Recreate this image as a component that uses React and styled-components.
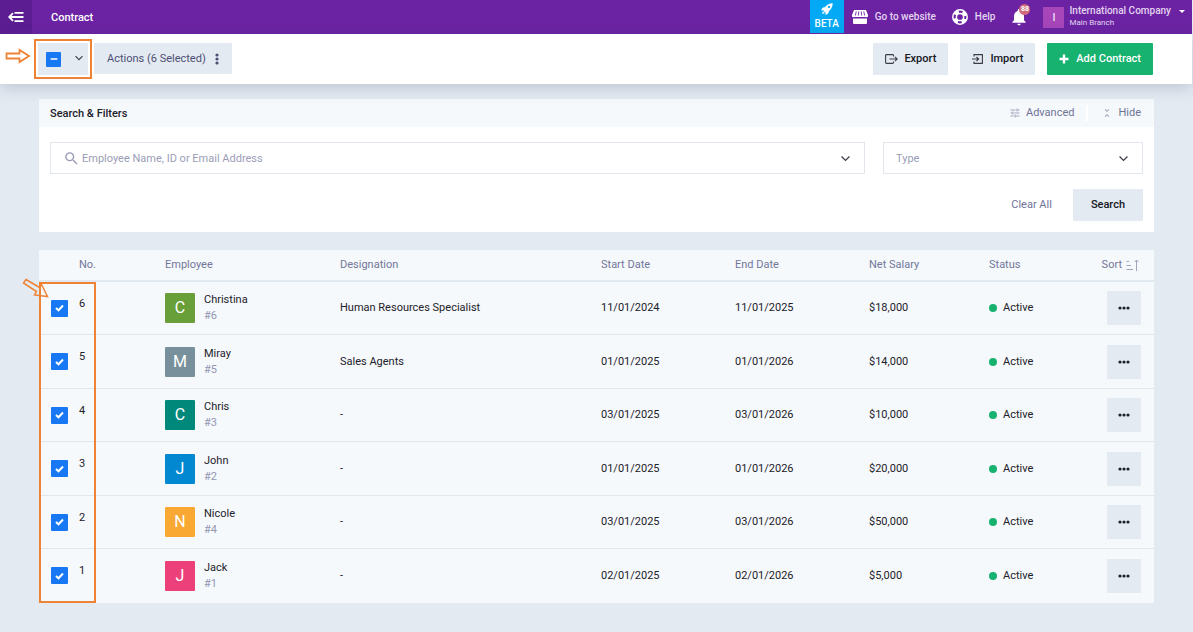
import React, { useEffect, useRef } from "react";
import styled, { createGlobalStyle } from "styled-components";
import { MdSearch, MdTune, MdUnfoldLess, MdNotifications } from "react-icons/md";
import { FaMinus } from "react-icons/fa";
import { IoIosRocket } from "react-icons/io";

const GlobalStyle = createGlobalStyle`
  * {
    box-sizing: border-box;
  }

  body {
    margin: 0;
    background-color: #e4eaf2;
    font-family: Roboto, "Liberation Sans", sans-serif;
    font-size: 11px;
    line-height: 16px;
    color: #1d2129;
  }

  button,
  input,
  select {
    font: inherit;
    color: inherit;
    margin: 0;
  }

  button {
    border: none;
    padding: 0;
    background: none;
    cursor: pointer;
  }
`;

const Page = styled.div`
  min-height: 100vh;
  padding-right: 1px;
`;

const TopBar = styled.header`
  display: flex;
  align-items: center;
  height: 34px;
  background-color: #6b23a3;
  color: #fff;
`;

const MenuButton = styled.button`
  display: flex;
  align-items: center;
  justify-content: center;
  width: 32px;
  height: 34px;
  background-color: #5c1d93;
`;

const PageTitle = styled.h1`
  flex: 1;
  margin: 0 0 0 19px;
  padding-top: 1px;
  font-size: 11px;
  font-weight: 500;
`;

const Beta = styled.a`
  display: flex;
  flex-direction: column;
  align-items: center;
  width: 34px;
  height: 33px;
  padding-top: 2px;
  align-self: flex-start;
  background-color: #03a9f4;
  color: #fff;
  font-size: 10px;
  font-weight: 500;
  text-decoration: none;
`;

const TopLink = styled.a`
  display: flex;
  align-items: center;
  gap: 7px;
  margin-left: ${(props) => props.$space}px;
  color: #e3d3f0;
  font-size: 10px;
  font-weight: 500;
  text-decoration: none;

  svg {
    color: #fff;
  }
`;

const BellButton = styled.button`
  position: relative;
  width: 20px;
  height: 20px;
  margin-left: 14px;
  color: #fff;
`;

const Badge = styled.span`
  position: absolute;
  top: -3px;
  right: -1px;
  width: 11px;
  height: 11px;
  border-radius: 50%;
  background-color: #d06a7c;
  font-size: 7px;
  font-weight: 700;
  line-height: 11px;
  text-align: center;
`;

const Account = styled.button`
  display: flex;
  align-items: center;
  margin: 0 7px 0 14px;
  text-align: left;
  color: #e3d3f0;
`;

const AccountInitial = styled.span`
  width: 21px;
  height: 21px;
  margin-right: 5px;
  background-color: #a646b9;
  color: #fff;
  line-height: 21px;
  text-align: center;
`;

const AccountText = styled.span`
  display: flex;
  flex-direction: column;
  margin-right: 8px;
  font-size: 10px;
  font-weight: 500;
  line-height: 12px;

  small {
    font-size: 8px;
    font-weight: 400;
  }
`;

const Caret = styled.span`
  align-self: flex-start;
  margin-top: 5px;
  border: 3px solid transparent;
  border-top-color: #fff;
  border-bottom: none;
`;

const Toolbar = styled.div`
  position: relative;
  display: flex;
  align-items: flex-start;
  height: 50px;
  padding: 9px 39px 0 38px;
  background-color: #fff;
  box-shadow: 0 4px 14px rgba(60, 75, 105, 0.22);
`;

const SelectAll = styled.div`
  display: flex;
  align-items: center;
  justify-content: space-between;
  width: 50px;
  height: 32px;
  padding: 0 5px 0 8px;
  background-color: #e4eaf2;
`;

const CheckWrap = styled.span`
  display: grid;
  place-items: center;
  width: ${(props) => props.$size}px;
  height: ${(props) => props.$size}px;

  input,
  svg {
    grid-area: 1 / 1;
  }

  input {
    appearance: none;
    width: 100%;
    height: 100%;
    border-radius: 1px;
    background-color: #1877f2;
  }

  svg {
    z-index: 1;
    color: #fff;
    pointer-events: none;
  }
`;

const ToolButton = styled.button`
  display: flex;
  align-items: center;
  justify-content: center;
  gap: ${(props) => props.$gap || 6}px;
  height: 32px;
  padding: 0 12px;
  border-radius: 1px;
  background-color: ${(props) => (props.$primary ? "#17b26f" : "#e4eaf2")};
  color: ${(props) => (props.$primary ? "#fff" : props.$muted ? "#4c4f73" : "#15171c")};
  font-weight: 500;
`;

const ActionsButton = styled(ToolButton)`
  margin-left: 6px;
  height: 31px;
  padding: 0 13px;
  font-weight: 400;
`;

const ToolGroup = styled.div`
  display: flex;
  gap: 12px;
  margin-left: auto;
`;

const Main = styled.main`
  display: flex;
  flex-direction: column;
  gap: 18px;
  padding: 15px 38px 29px 39px;
`;

const Card = styled.section`
  background-color: #fff;
`;

const CardHeader = styled.div`
  display: flex;
  align-items: center;
  height: 28px;
  padding: 0 13px 0 11px;
  background-color: #f5f9fc;
`;

const CardTitle = styled.h2`
  flex: 1;
  margin: 0;
  padding-top: 1px;
  font-size: 11px;
  font-weight: 500;
`;

const HeaderButton = styled.button`
  display: flex;
  align-items: center;
  gap: 5px;
  color: #6f7396;

  svg {
    color: #a3a6ba;
  }

  & + & {
    margin-left: 12px;
    padding-left: 13px;
    border-left: 2px solid #fff;
  }
`;

const FilterBody = styled.form`
  padding: 15px 11px 11px;
`;

const FilterRow = styled.div`
  display: flex;
  gap: 18px;
`;

const Field = styled.label`
  display: flex;
  align-items: center;
  flex: ${(props) => props.$flex};
  height: 32px;
  padding: 0 14px 0 12px;
  border: 1px solid #e2e7ee;
  color: #9b9db8;

  input,
  select {
    flex: 1;
    min-width: 0;
    border: none;
    padding: 1px 0 0;
    outline: none;
    background: none;
    appearance: none;
  }

  input {
    margin-left: 2px;
  }

  input::placeholder {
    color: #9b9db8;
    opacity: 1;
  }
`;

const FilterActions = styled.div`
  display: flex;
  justify-content: flex-end;
  align-items: center;
  gap: 21px;
  margin-top: 15px;
`;

const ClearButton = styled.button`
  color: #6f7396;
`;

const SearchButton = styled(ToolButton)`
  padding: 0 18px;
`;

const TableCard = styled.div`
  position: relative;
`;

const Table = styled.table`
  width: 100%;
  table-layout: fixed;
  border-collapse: separate;
  border-spacing: 0;
  background-color: #f5f9fc;

  th {
    height: 32px;
    padding: 0;
    border-bottom: 2px solid #e2e8f0;
    color: #73769a;
    font-weight: 400;
    text-align: left;
  }

  th:last-child {
    padding-right: 15px;
    white-space: nowrap;
  }

  td {
    height: 53px;
    padding: 0;
    border-bottom: 1px solid #e1e7ee;
  }

  tbody tr:nth-child(even) td {
    height: 54px;
  }

  tbody tr:last-child td {
    border-bottom-color: #f5f9fc;
  }

  td:first-child {
    padding-left: 12px;
  }

  td:last-child {
    padding-right: 13px;
  }
`;

const Col = styled.col`
  width: ${(props) => props.$width};
`;

const RowNumber = styled.span`
  display: block;
  padding-bottom: 9px;
`;

const Employee = styled.div`
  display: flex;
  align-items: center;
  gap: 9px;
`;

const Avatar = styled.span`
  width: 30px;
  height: 30px;
  border-radius: 1px;
  background-color: ${(props) => props.$color};
  color: #fff;
  font-size: 16px;
  line-height: 30px;
  text-align: center;
`;

const EmployeeName = styled.div`
  small {
    display: block;
    color: #9496b2;
    font-size: 11px;
  }
`;

const Status = styled.span`
  display: flex;
  align-items: center;
  gap: 6px;

  &::before {
    content: "";
    width: 8px;
    height: 8px;
    border-radius: 50%;
    background-color: #17b26f;
  }
`;

const SortButton = styled.button`
  display: flex;
  align-items: center;
  gap: 4px;
  margin-left: auto;
`;

const MoreButton = styled.button`
  display: flex;
  align-items: center;
  justify-content: center;
  width: 34px;
  height: 34px;
  margin-left: auto;
  background-color: #e4eaf2;
`;

const Highlight = styled.div`
  position: absolute;
  border: 2px solid #ee8336;
  pointer-events: none;
`;

const ToolbarHighlight = styled(Highlight)`
  top: 5px;
  left: 34px;
  width: 58px;
  height: 40px;
`;

const RowsHighlight = styled(Highlight)`
  top: 32px;
  bottom: 0;
  left: 0;
  width: 57px;
`;

const ToolbarArrow = styled.svg`
  position: absolute;
  top: 14px;
  left: 5px;
`;

const RowsArrow = styled.svg`
  position: absolute;
  top: 28px;
  left: -17px;
`;

const contracts = [
  { no: 6, name: "Christina", id: "#6", color: "#689f38", designation: "Human Resources Specialist", start: "11/01/2024", end: "11/01/2025", salary: "$18,000" },
  { no: 5, name: "Miray", id: "#5", color: "#78909c", designation: "Sales Agents", start: "01/01/2025", end: "01/01/2026", salary: "$14,000" },
  { no: 4, name: "Chris", id: "#3", color: "#00897b", designation: "-", start: "03/01/2025", end: "03/01/2026", salary: "$10,000" },
  { no: 3, name: "John", id: "#2", color: "#0288d1", designation: "-", start: "01/01/2025", end: "01/01/2026", salary: "$20,000" },
  { no: 2, name: "Nicole", id: "#4", color: "#f9a833", designation: "-", start: "03/01/2025", end: "03/01/2026", salary: "$50,000" },
  { no: 1, name: "Jack", id: "#1", color: "#ec407a", designation: "-", start: "02/01/2025", end: "02/01/2026", salary: "$5,000" },
];

const BackMenuIcon = () => (
  <svg width="16" height="12" viewBox="0 0 16 12" fill="none" stroke="#fff" strokeWidth="1.8">
    <path d="M6.5 1.8H15.5M1 6H15.5M6.5 10.2H15.5M5 2.2L1.2 6L5 9.8" />
  </svg>
);

const StoreIcon = () => (
  <svg width="16" height="14" viewBox="0 0 16 14" fill="currentColor">
    <path d="M2 0H14L16 5V6.500Q15 7.700 13.400 7H2.600Q1 7.700 0 6.500V5Z" />
    <path d="M1 8.500H15V13Q15 14 14 14H2Q1 14 1 13Z" />
    <path d="M4.300 1.500L3.300 5.500M6.800 1.500L6.300 5.500M9.200 1.500L9.700 5.500M11.700 1.500L12.700 5.500" stroke="#6b23a3" strokeWidth="0.900" />
  </svg>
);

const HelpIcon = () => (
  <svg width="16" height="16" viewBox="0 0 16 16" fill="none" stroke="currentColor">
    <circle cx="8" cy="8" r="7.200" strokeWidth="1.500" />
    <circle cx="8" cy="8" r="3.600" strokeWidth="1.500" />
    <circle cx="8" cy="8" r="5.300" strokeWidth="3.600" strokeDasharray="4.600 3.725" strokeDashoffset="-1.860" />
  </svg>
);

const CheckIcon = () => (
  <svg width="9" height="8" viewBox="0 0 9 8" fill="none" stroke="currentColor" strokeWidth="2">
    <path d="M1 4L3.500 6.300L8 1.500" />
  </svg>
);

const PlusIcon = () => (
  <svg width="10" height="10" viewBox="0 0 10 10" fill="none" stroke="currentColor" strokeWidth="2.400">
    <path d="M5 0.500V9.500M0.500 5H9.500" />
  </svg>
);

const ChevronIcon = ({ size = 8 }) => (
  <svg width={size} height={size} viewBox="0 0 8 8" fill="none" stroke="#3a3d45" strokeWidth="1.100">
    <path d="M0.500 2.200L4 5.700L7.500 2.200" />
  </svg>
);

const DotsIcon = ({ vertical }) => (
  <svg width={vertical ? 4 : 12} height={vertical ? 12 : 4} viewBox={vertical ? "0 0 4 12" : "0 0 12 4"} fill="currentColor">
    {[2, 6, 10].map((p) => (
      <circle key={p} cx={vertical ? 2 : p} cy={vertical ? p : 2} r="1.600" />
    ))}
  </svg>
);

const ExportIcon = () => (
  <svg width="13" height="10" viewBox="0 0 13 10" fill="none" stroke="#3a3d45" strokeWidth="1.100">
    <path d="M8.500 2.500V1.500Q8.500 0.600 7.600 0.600H1.500Q0.600 0.600 0.600 1.500V8.500Q0.600 9.400 1.500 9.400H7.600Q8.500 9.400 8.500 8.500V7.500" />
    <path d="M4.500 5H12M10 2.800L12.200 5L10 7.200" />
  </svg>
);

const ImportIcon = () => (
  <svg width="11" height="10" viewBox="0 0 11 10" fill="none" stroke="#3a3d45" strokeWidth="1.100">
    <path d="M2 2.500V0.600H10.400V9.400H2V7.500" />
    <path d="M0 5H6M4.500 3L6.700 5L4.500 7" />
  </svg>
);

const SortIcon = () => (
  <svg width="13" height="12" viewBox="0 0 13 12" fill="none" stroke="#a3a6ba">
    <path d="M0.500 2.500H3M0.500 6.500H5M0.500 10.500H7M10.500 12V1M8.500 3L10.500 1L12.500 3" />
  </svg>
);

const SelectAllCheckbox = () => {
  const ref = useRef(null);

  useEffect(() => {
    ref.current.indeterminate = true;
  }, []);

  return (
    <CheckWrap $size={15}>
      <input ref={ref} type="checkbox" aria-label="Select all contracts" />
      <FaMinus size={8} />
    </CheckWrap>
  );
};

const App = () => {
  return (
    <Page>
      <GlobalStyle />
      <TopBar>
        <MenuButton aria-label="Toggle menu">
          <BackMenuIcon />
        </MenuButton>
        <PageTitle>Contract</PageTitle>
        <Beta href="#beta">
          <IoIosRocket size={14} />
          BETA
        </Beta>
        <TopLink href="#website" $space={8}>
          <StoreIcon />
          Go to website
        </TopLink>
        <TopLink href="#help" $space={16}>
          <HelpIcon />
          Help
        </TopLink>
        <BellButton aria-label="Notifications">
          <MdNotifications size={20} />
          <Badge>88</Badge>
        </BellButton>
        <Account>
          <AccountInitial>I</AccountInitial>
          <AccountText>
            International Company
            <small>Main Branch</small>
          </AccountText>
          <Caret />
        </Account>
      </TopBar>

      <Toolbar>
        <SelectAll>
          <SelectAllCheckbox />
          <button aria-label="Selection options">
            <ChevronIcon />
          </button>
        </SelectAll>
        <ActionsButton $muted $gap={9}>
          Actions (6 Selected)
          <DotsIcon vertical />
        </ActionsButton>
        <ToolGroup>
          <ToolButton>
            <ExportIcon />
            Export
          </ToolButton>
          <ToolButton $gap={7}>
            <ImportIcon />
            Import
          </ToolButton>
          <ToolButton $primary $gap={7}>
            <PlusIcon />
            Add Contract
          </ToolButton>
        </ToolGroup>
        <ToolbarHighlight />
        <ToolbarArrow width="26" height="16" viewBox="0 0 26 16" fill="none" stroke="#ee8336" strokeWidth="1.800">
          <path d="M1.500 5.500H14.500V2L24 8L14.500 14V10.500H1.500Z" />
        </ToolbarArrow>
      </Toolbar>

      <Main>
        <Card>
          <CardHeader>
            <CardTitle>Search &amp; Filters</CardTitle>
            <HeaderButton>
              <MdTune size={12} />
              Advanced
            </HeaderButton>
            <HeaderButton>
              <MdUnfoldLess size={12} />
              Hide
            </HeaderButton>
          </CardHeader>
          <FilterBody onSubmit={(e) => e.preventDefault()}>
            <FilterRow>
              <Field $flex="1">
                <MdSearch size={17} />
                <input type="text" placeholder="Employee Name, ID or Email Address" aria-label="Employee" />
                <ChevronIcon size={9} />
              </Field>
              <Field $flex="0 0 260px">
                <select aria-label="Type" defaultValue="">
                  <option value="">Type</option>
                </select>
                <ChevronIcon size={9} />
              </Field>
            </FilterRow>
            <FilterActions>
              <ClearButton type="reset">Clear All</ClearButton>
              <SearchButton type="submit">Search</SearchButton>
            </FilterActions>
          </FilterBody>
        </Card>

        <TableCard>
          <Table>
            <colgroup>
              <Col $width="40px" />
              <Col $width="86px" />
              <Col $width="175px" />
              <Col />
              <Col $width="134px" />
              <Col $width="134px" />
              <Col $width="120px" />
              <Col $width="100px" />
              <Col $width="65px" />
            </colgroup>
            <thead>
              <tr>
                <th aria-label="Selected" />
                <th>No.</th>
                <th>Employee</th>
                <th>Designation</th>
                <th>Start Date</th>
                <th>End Date</th>
                <th>Net Salary</th>
                <th>Status</th>
                <th>
                  <SortButton>
                    Sort
                    <SortIcon />
                  </SortButton>
                </th>
              </tr>
            </thead>
            <tbody>
              {contracts.map((item) => (
                <tr key={item.no}>
                  <td>
                    <CheckWrap $size={17}>
                      <input type="checkbox" defaultChecked aria-label={`Select contract ${item.no}`} />
                      <CheckIcon />
                    </CheckWrap>
                  </td>
                  <td>
                    <RowNumber>{item.no}</RowNumber>
                  </td>
                  <td>
                    <Employee>
                      <Avatar $color={item.color}>{item.name[0]}</Avatar>
                      <EmployeeName>
                        {item.name}
                        <small>{item.id}</small>
                      </EmployeeName>
                    </Employee>
                  </td>
                  <td>{item.designation}</td>
                  <td>{item.start}</td>
                  <td>{item.end}</td>
                  <td>{item.salary}</td>
                  <td>
                    <Status>Active</Status>
                  </td>
                  <td>
                    <MoreButton aria-label={`Options for ${item.name}`}>
                      <DotsIcon />
                    </MoreButton>
                  </td>
                </tr>
              ))}
            </tbody>
          </Table>
          <RowsHighlight />
          <RowsArrow width="28" height="22" viewBox="0 0 28 22" fill="none" stroke="#ee8336" strokeWidth="1.500">
            <path d="M4 1.500L17.500 9.500L19.500 6.500L25.500 18.500L12.500 17L14.500 13.500L1.500 5Z" />
          </RowsArrow>
        </TableCard>
      </Main>
    </Page>
  );
};

export default App;
